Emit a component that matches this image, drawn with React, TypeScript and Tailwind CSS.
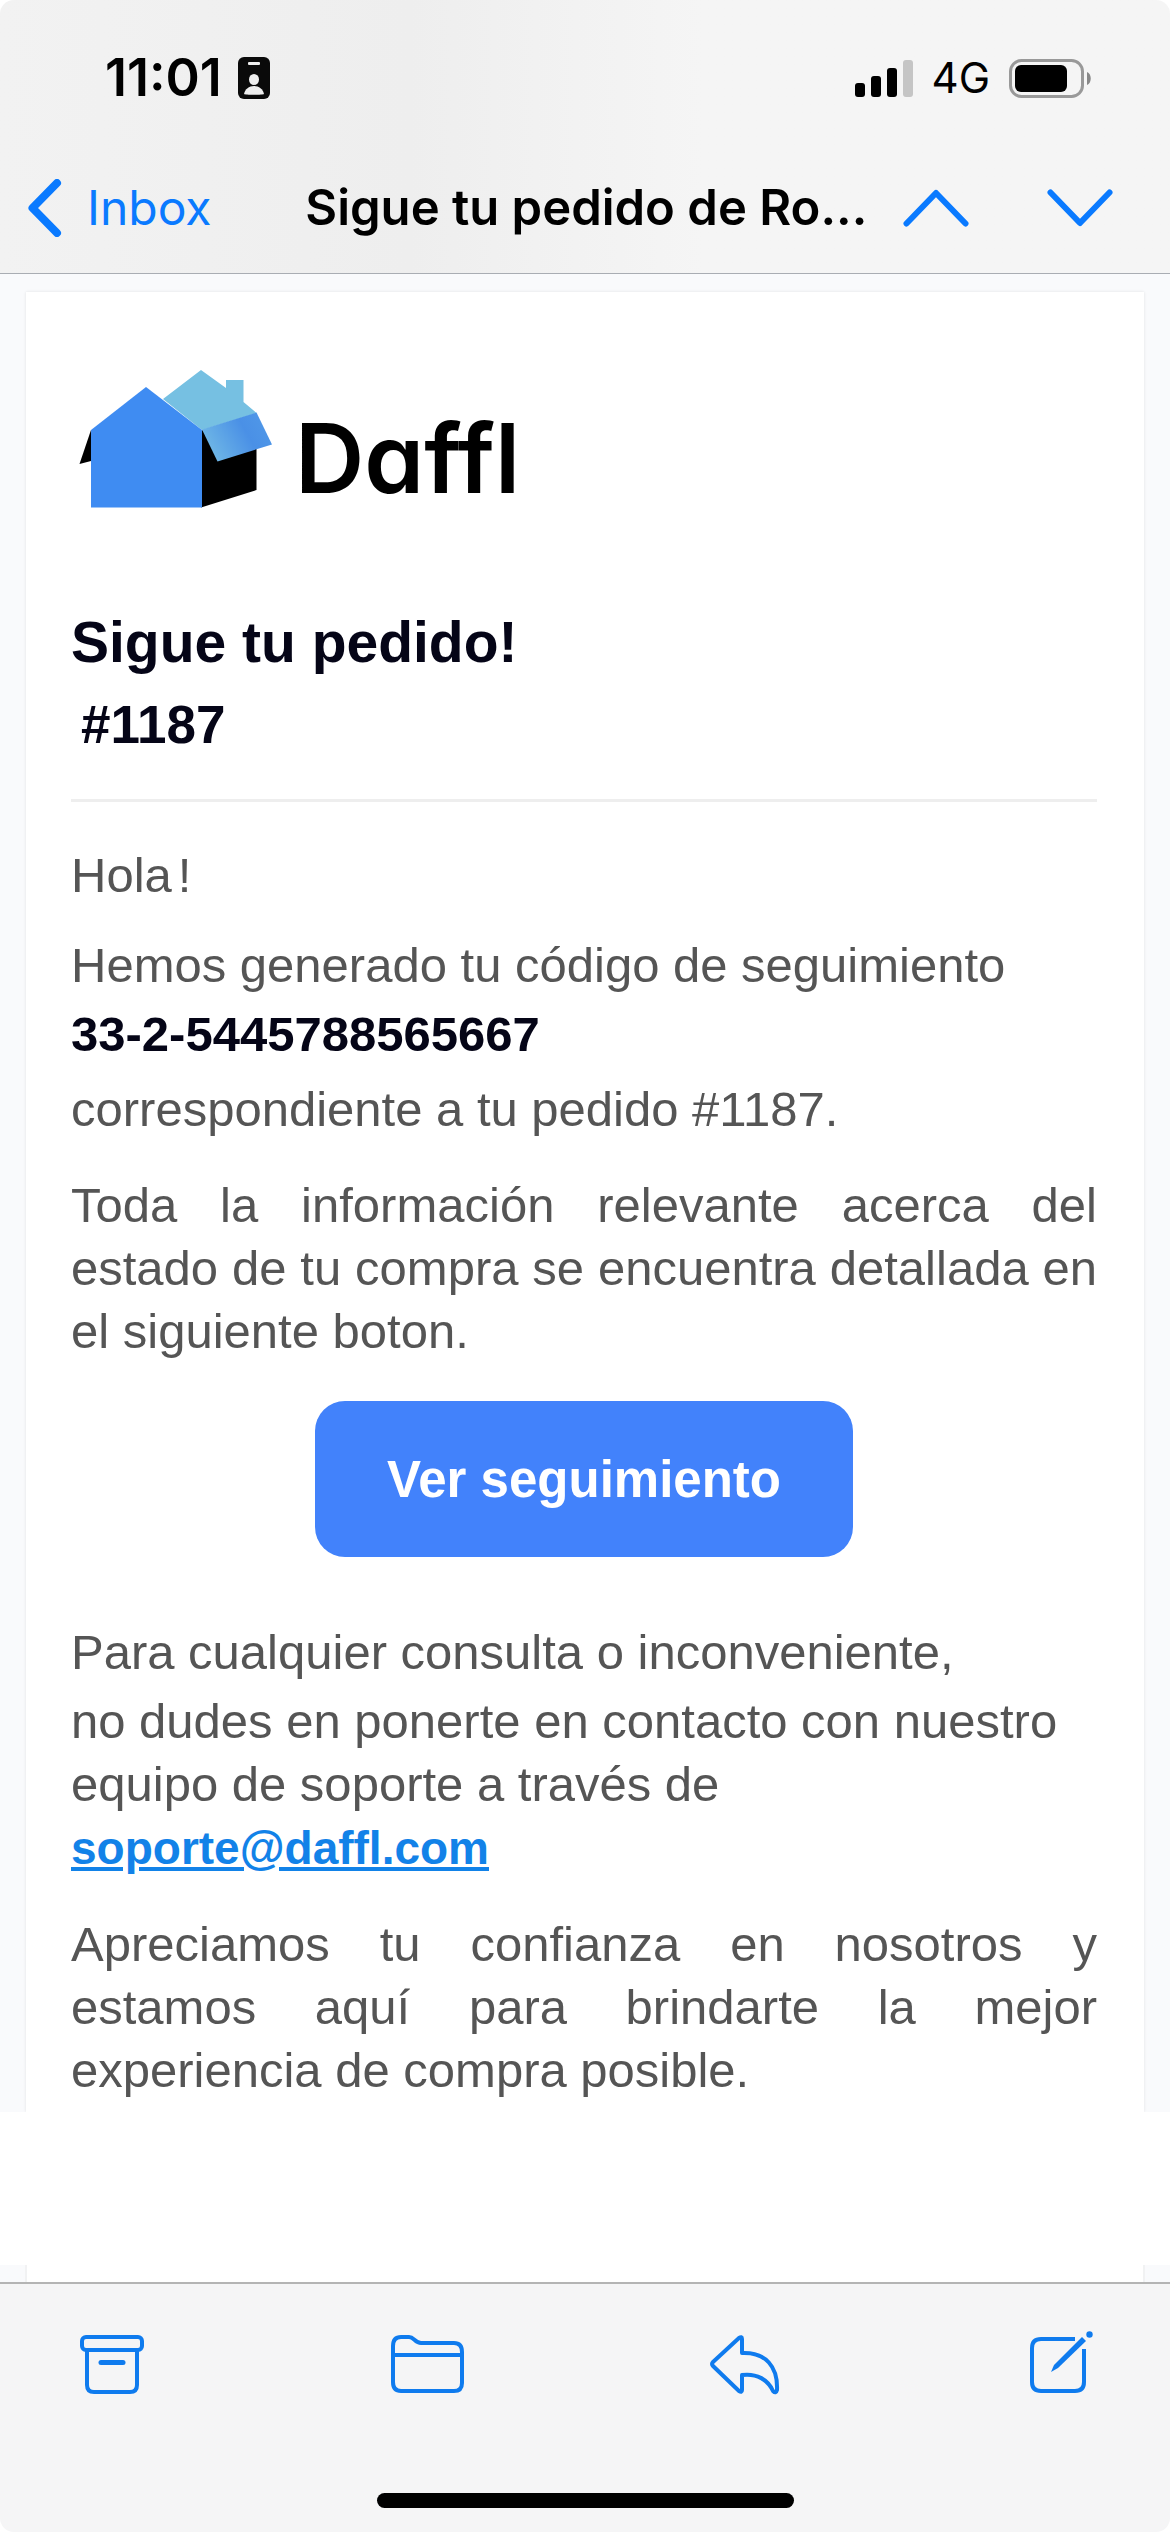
import React from 'react';

const HouseLogo = () => (
  <svg width="194" height="138" viewBox="79 370 194 138" aria-hidden="true">
    <defs>
      <linearGradient id="flap" x1="0" y1="0.7" x2="1" y2="0.3">
        <stop offset="0.1" stopColor="#6cb4e6" />
        <stop offset="0.65" stopColor="#4a90e6" />
        <stop offset="1" stopColor="#5098e8" />
      </linearGradient>
    </defs>
    <path d="M91 430 79.500 464 91 461Z" fill="#000" />
    <path d="M201 430V507.500L256.500 490V440Z" fill="#000" />
    <path d="M163 399 201 370 226 388V380H243.500V402L256.500 413 202 430Z" fill="#76c0e2" />
    <path d="M202 429.500 256.500 412.500 272 444.500 217.500 461.500Z" fill="url(#flap)" />
    <path d="M91 430 146 387 202 430V507.500H91Z" fill="#3f8cf2" />
  </svg>
);

const StatusBar = () => (
  <div className="flex h-[156px] items-center justify-between pl-[105px] pr-[78px]">
    <div className="flex items-center gap-[16px]">
      <span className="text-[52px] font-semibold leading-[60px]">11:01</span>
      <svg width="32" height="42" viewBox="0 0 32 42" aria-hidden="true">
        <rect width="32" height="42" rx="6" fill="#0a0a0a" />
        <rect x="10" y="5" width="12" height="3" rx="1" fill="#eee" />
        <ellipse cx="16" cy="22.500" rx="5" ry="5.500" fill="#eee" />
        <path d="M6 37c1-5 5-8 10-8s9 3 10 8c0 1-20 1-20 0Z" fill="#eee" />
      </svg>
    </div>
    <div className="flex items-center gap-[19px]">
      <svg width="58" height="37" viewBox="0 0 58 37" aria-hidden="true">
        <rect x="0" y="23" width="10" height="14" rx="3" />
        <rect x="16" y="16" width="10" height="21" rx="3" />
        <rect x="32" y="8" width="10" height="29" rx="3" />
        <rect x="48" y="0" width="10" height="37" rx="3" fill="#c5c5c5" />
      </svg>
      <span className="text-[42px] leading-[60px]">4G</span>
      <svg width="83" height="39" viewBox="0 0 83 39" aria-hidden="true">
        <rect x="1.500" y="1.500" width="72" height="36" rx="11" fill="none" stroke="#999" strokeWidth="3" />
        <rect x="6" y="6" width="52" height="27" rx="6" />
        <path d="M78 13c5 2 5 11 0 13Z" fill="#888" />
      </svg>
    </div>
  </div>
);

const NavBar = () => (
  <nav className="flex h-[117px] items-center pb-[14px] pl-[28px] pr-[57px]">
    <a href="#inbox" className="flex shrink-0 items-center gap-[25px] text-[#0a7aff]">
      <svg width="34" height="58" viewBox="0 0 34 58" fill="none" stroke="currentColor" strokeWidth="8" strokeLinecap="round" strokeLinejoin="round" aria-hidden="true">
        <path d="M29 4 4.500 29 29 54" />
      </svg>
      <span className="text-[48px] leading-[60px]">Inbox</span>
    </a>
    <h1 className="ml-[64px] mr-[6px] min-w-0 flex-1 whitespace-nowrap text-center text-[49px] font-semibold leading-[60px]">
      Sigue tu pedido de Ro...
    </h1>
    <div className="flex shrink-0 gap-[78px] text-[#0a7aff]">
      <button aria-label="Anterior">
        <svg width="66" height="38" viewBox="0 0 66 38" fill="none" stroke="currentColor" strokeWidth="6" strokeLinecap="round" strokeLinejoin="round">
          <path d="M3.500 34.500 33 4 62.500 34.500" />
        </svg>
      </button>
      <button aria-label="Siguiente">
        <svg width="66" height="38" viewBox="0 0 66 38" fill="none" stroke="currentColor" strokeWidth="6" strokeLinecap="round" strokeLinejoin="round">
          <path d="M3.500 3.500 33 34 62.500 3.500" />
        </svg>
      </button>
    </div>
  </nav>
);

const Message = () => (
  <article className="mx-[26px] flex-1 bg-white pl-[45px] pr-[47px] pt-[78px] font-['Liberation_Sans',Arial,sans-serif] text-[49px] leading-[63px] text-[#555] shadow-[0_0_3px_rgba(0,0,0,0.1)]">
    <div className="flex items-end gap-[22px] pl-[8px] text-black">
      <HouseLogo />
      <span className="font-['Inter',sans-serif] text-[96px] font-semibold leading-[100px] [font-feature-settings:'cv11']">
        Daffl
      </span>
    </div>
    <h2 className="mt-[98px] text-[57px] font-bold leading-[72px] text-[#050517]">Sigue tu pedido!</h2>
    <p className="mt-[14px] pl-[10px] text-[53px] font-bold leading-[66px] text-[#050517]">#1187</p>
    <hr className="mt-[41px] border-t-[3px] border-[#eee]" />
    <p className="mt-[42px]">
      Hola<span className="pl-[6px]">!</span>
    </p>
    <p className="mt-[27px]">Hemos generado tu código de seguimiento</p>
    <p className="mt-[6px] font-bold text-[#050517]">33-2-5445788565667</p>
    <p className="mt-[12px]">correspondiente a tu pedido #1187.</p>
    <p className="mt-[33px] text-justify">
      Toda la información relevante acerca del estado de tu compra se encuentra detallada en el siguiente boton.
    </p>
    <div className="mt-[38px] flex justify-center">
      <button className="h-[156px] w-[538px] rounded-[30px] bg-[#4282fb] text-[51px] font-bold text-white">
        Ver seguimiento
      </button>
    </div>
    <p className="mt-[64px]">Para cualquier consulta o inconveniente,</p>
    <p className="mt-[6px]">
      no dudes en ponerte en contacto con nuestro
      <br />
      equipo de soporte a través de
      <br />
      <a href="mailto:soporte@daffl.com" className="text-[46px] font-bold text-[#1282e8] underline">
        soporte@daffl.com
      </a>
    </p>
    <p className="mt-[33px] text-justify">
      Apreciamos tu confianza en nosotros y estamos aquí para brindarte la mejor experiencia de compra posible.
    </p>
  </article>
);

const Toolbar = () => (
  <footer className="rounded-b-[14px] border-t-2 border-[#b4b4b4] bg-[#f5f5f6] pt-[47px]">
    <div className="flex items-center justify-between pl-[80px] pr-[76px] text-[#0f7bee]">
      <button aria-label="Archivar">
        <svg width="64" height="64" viewBox="0 0 64 64" fill="none" stroke="currentColor" strokeWidth="4">
          <rect x="2" y="6" width="60" height="13" rx="4" />
          <path d="M7 19V54Q7 61 14 61H50Q57 61 57 54V19" />
          <path d="M21 31.500H43" strokeWidth="5" strokeLinecap="round" />
        </svg>
      </button>
      <button aria-label="Mover">
        <svg width="74" height="64" viewBox="0 0 74 64" fill="none" stroke="currentColor" strokeWidth="4">
          <path d="M3 51V15Q3 6 11 6H19C24 6 25 12 31 12H64Q72 12 72 21V52Q72 60 64 60H11Q3 60 3 51ZM3 24H72" />
        </svg>
      </button>
      <button aria-label="Responder">
        <svg width="74" height="64" viewBox="0 0 74 64" fill="none" stroke="currentColor" strokeWidth="4" strokeLinejoin="round">
          <path d="M32 8Q32 5 29 7L3 31Q1 33 3 35L29 60Q32 62 32 59V44C47 42 58 49 63 60Q66 63 67 59C68 36 56 21 32 22Z" />
        </svg>
      </button>
      <button aria-label="Redactar">
        <svg width="64" height="64" viewBox="0 0 64 64" fill="none" stroke="currentColor" strokeWidth="4">
          <path d="M45 8H11Q2 8 2 17V51Q2 60 11 60H45Q54 60 54 51V18" />
          <path d="M21 41 24 34 52 6 56 10 28 37Z" fill="currentColor" stroke="none" />
          <circle cx="59.500" cy="3.500" r="3.200" fill="currentColor" stroke="none" />
        </svg>
      </button>
    </div>
    <div className="flex justify-center pb-[24px] pt-[98px]">
      <div className="h-[15px] w-[417px] rounded-full bg-black" />
    </div>
  </footer>
);

const App = () => {
  return (
    <div className="flex min-h-screen flex-col bg-white font-['Inter',sans-serif] text-black">
      <header className="rounded-t-[14px] border-b border-[#a9adb3] bg-linear-to-r from-[#f2f2f2] via-[#eeeeee] via-35% to-[#f5f5f5] to-60%">
        <StatusBar />
        <NavBar />
      </header>
      <main className="flex flex-1 flex-col bg-[#f9fafc] pt-[18px]">
        <Message />
        <div className="relative h-[153px] bg-white" />
        <div className="mx-[25px] h-[17px] border-x-2 border-[#f1f2f3] bg-white" />
      </main>
      <Toolbar />
    </div>
  );
};

export default App;
